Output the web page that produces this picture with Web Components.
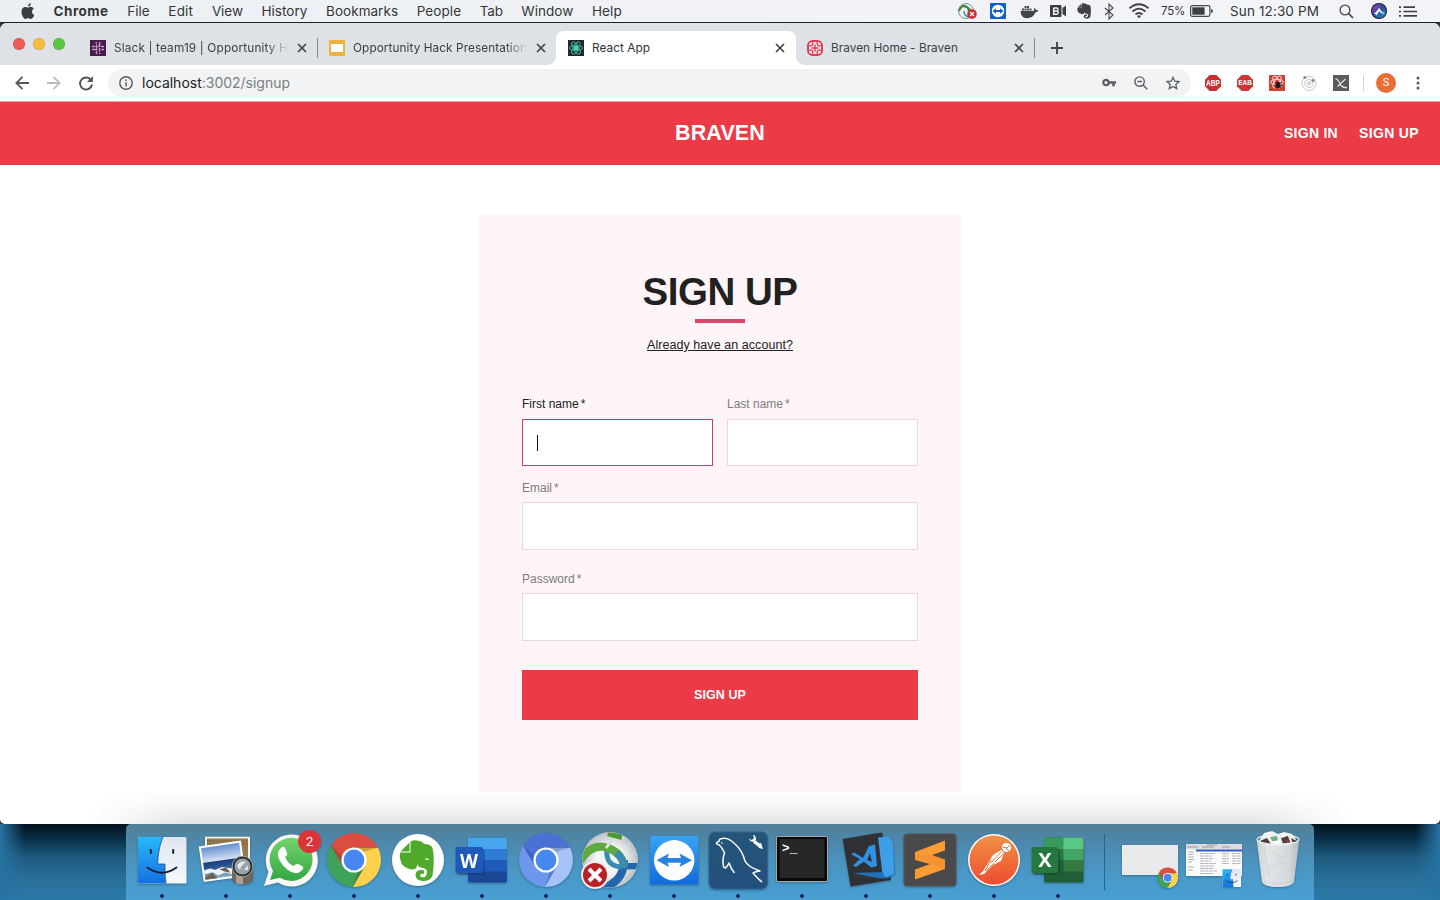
<!DOCTYPE html>
<html lang="en">
<head>
<meta charset="utf-8">
<title>React App</title>
<style>
  html, body { margin: 0; height: 100%; overflow: hidden; }
  body { font-family: Inter, Roboto, sans-serif; color: #333639; }
</style>
</head>
<body>
<desktop-screen>
  <menu-bar slot="menu"></menu-bar>
  <browser-window>
    <browser-tab slot="tabs" data-icon="slack" data-width="174" data-fade>Slack | team19 | Opportunity H</browser-tab>
    <browser-tab slot="tabs" data-icon="slides" data-width="174" data-fade data-plain>Opportunity Hack Presentation</browser-tab>
    <browser-tab slot="tabs" data-icon="react" data-width="58" data-active>React App</browser-tab>
    <browser-tab slot="tabs" data-icon="braven" data-width="127">Braven Home - Braven</browser-tab>
    <site-header></site-header>
    <sign-up-card></sign-up-card>
  </browser-window>
  <mac-dock slot="dock"></mac-dock>
</desktop-screen>

<script>
const define = (name, html, setup) => {
  const template = document.createElement("template");
  template.innerHTML = html;
  customElements.define(name, class extends HTMLElement {
    constructor() {
      super();
      this.attachShadow({ mode: "open" });
      this.shadowRoot.appendChild(template.content.cloneNode(true));
    }
    connectedCallback() {
      if (setup) setup(this, this.shadowRoot);
    }
  });
};

// three sectors of the Chrome wheel, shared by Chrome, Chromium and the small badge
const wheel = (top, right, left, hub, shade) => `
  <path fill="${left}" d="M30.9 62.95A27 27 0 0 1 9.2 21.55L21.2 42.25L42.8 42.25Z"/>
  <path fill="${right}" d="M55.9 23.5A27 27 0 0 1 30.9 62.95L42.8 42.25L32 23.5Z"/>
  <path fill="${top}" d="M9.2 21.55A27 27 0 0 1 55.9 23.5L32 23.5L21.2 42.25Z"/>
  <path fill="${shade}" opacity=".25" d="M32 23.5H55.9L42 28ZM21.2 42.25L9.2 21.55L20 32ZM42.8 42.25L30.9 62.95L36 47Z"/>
  <circle cx="32" cy="36" r="12.6" fill="#fff"/><circle cx="32" cy="36" r="10.4" fill="${hub}"/>`;

const face = `
  <defs><linearGradient id="fb" x2="0" y2="1"><stop stop-color="#27b9fb"/><stop offset="1" stop-color="#1670e0"/></linearGradient>
  <linearGradient id="fw" x2="0" y2="1"><stop stop-color="#dfe5f0"/><stop offset="1" stop-color="#f6f7fb"/></linearGradient></defs>
  <rect x="8" y="13" width="48.500" height="46.500" rx="1.500" fill="url(#fw)"/>
  <path fill="url(#fb)" d="M9.500 13H33C30 20 28 29 27.700 40H35C35 47 35 53 36 59.500H9.500Q8 59.500 8 58V14.500Q8 13 9.500 13Z"/>
  <path fill="none" stroke="#1b4d8c" stroke-width=".8" d="M33 13C30 20 28 29 27.700 40H35C35 47 35 53 36 59.500"/>
  <path fill="none" stroke="#10202f" stroke-width="2" stroke-linecap="round" d="M20.800 26V29M43.200 26V29"/>
  <path fill="none" stroke="#10202f" stroke-width="1.800" stroke-linecap="round" d="M17.500 43.500Q32 54 46.500 43.500"/>`;

const close = `<path d="M1 1L9 9M9 1L1 9" stroke="#3f4246" stroke-width="1.7"/>`;
const elephant = `
  <path fill="currentColor" d="M14 28.500H24.500V17.500Q28 15.500 33 17Q37 17.500 38 20Q45 20 46.500 24Q49 34 46.500 52Q44 57.500 36 57Q29.500 56 29.500 51Q30 45.500 36 46L38 46.500V50Q34 49 34 52Q35.500 54 39 53Q41 51 41 47Q40 44 35 43.500Q32 43 31.500 40Q31 45.500 26 45.500Q17 44 15 38Q13 33 14 28.500ZM14.500 27.500L23.500 18.500V27.500Z"/>`;

// name: [width, height, drawing]
const icons = {
  apple: [14, 17, `<path fill="#3b3d40" d="M9.300 3.800C8.500 4 7.400 4.700 7 4.700C6.300 4.700 5.400 4 4.300 4C2.200 4 .5 5.800.5 8.800C.5 12.400 2.700 16 4.500 16C5.500 16 6 15.300 7.200 15.300C8.400 15.300 8.800 16 9.800 16C11.400 16 12.800 13.600 13.300 12.100C10.400 10.900 10.400 7 12.800 5.700C12 4.600 10.700 3.700 9.300 3.800ZM6.900 3.500C6.900 1.800 8.200.5 9.900.3C10 2 8.600 3.500 6.900 3.500Z"/>`],
  vpn: [21, 16, `<circle cx="9" cy="8" r="7.500" fill="#edf2ef" stroke="#687478" stroke-width=".8"/><path d="M2 8C5 1 11 1 12 9M5 3Q12 3 15 10" fill="none" stroke="#3b8a4c" stroke-width="2"/><path d="M7 8Q7 13 12 14" fill="none" stroke="#4d8ca5" stroke-width="1.500"/><circle cx="15" cy="11" r="4.800" fill="#c63136"/><path d="M13 9L17 13M17 9L13 13" stroke="#fff" stroke-width="1.300"/>`],
  viewer: [16, 16, `<rect width="16" height="16" rx="1" fill="#0e5fc9"/><circle cx="8" cy="8" r="6.200" fill="#fff"/><path fill="#0e5fc9" d="M2.500 8L6 5.300V7H10V5.300L13.500 8L10 10.700V9H6V10.700Z"/>`],
  docker: [19, 15, `<path fill="#404347" d="M.5 7H13.500Q14.500 6.500 14 4Q15.700 4.500 16 6.200Q17.500 5.800 18.500 6.500Q17.800 8.300 15.500 8.300Q13 14.500 6.500 14.200Q.8 14 .5 7ZM2 4.500H4V6.500H2ZM4.500 4.500H6.500V6.500H4.500ZM7 4.500H9V6.500H7ZM9.500 4.500H11.500V6.500H9.500ZM7 2H9V4H7ZM4.500 2H6.500V4H4.500Z"/>`],
  bcam: [17, 14, `<rect y="1" width="11.500" height="12" rx="1" fill="#3c3f42"/><path fill="#3c3f42" d="M12.500 4L16 1.500V12.500L12.500 10Z"/><path fill="none" stroke="#f2f4f6" stroke-width="1.400" d="M3.500 4H6.500Q8.200 4 8 5.500Q7.800 7 6 7H3.800H6.500Q8.500 7 8.300 8.700Q8 10.200 6.500 10.200H3.700V4"/>`],
  note: [14, 16, `<svg width="14" height="16" viewBox="13 16 35 42" preserveAspectRatio="none" color="#404246">${elephant}</svg>`],
  bluetooth: [10, 17, `<path fill="none" stroke="#45484b" stroke-width="1.100" d="M1 5L9 12L5 16V1L9 5L1 12"/>`],
  wifi: [22, 16, `<g fill="none" stroke="#3e4144" stroke-width="1.800"><path d="M1.500 5.200Q11-2.800 20.500 5.200M4.500 8.500Q11 2.800 17.500 8.500M7.500 11.500Q11 8.500 14.500 11.500"/></g><path fill="#3e4144" d="M9 13Q11 11.600 13 13L11 15.200Z"/>`],
  battery: [24, 12, `<rect x=".6" y=".6" width="19.300" height="10.800" rx="1.800" fill="none" stroke="#45484b" stroke-width="1.200"/><rect x="2.300" y="2.300" width="12.300" height="7.400" fill="#3c3f42"/><path fill="#45484b" d="M21 4Q23 4.500 23 6Q23 7.500 21 8Z"/>`],
  search: [15, 15, `<circle cx="6" cy="6" r="4.900" fill="none" stroke="#44474a" stroke-width="1.300"/><path d="M9.700 9.700L14 14" stroke="#44474a" stroke-width="1.700"/>`],
  siri: [16, 16, `<defs><linearGradient id="s" x2="1" y2="1"><stop stop-color="#b03fb2"/><stop offset=".5" stop-color="#2c4c99"/><stop offset="1" stop-color="#18a9d0"/></linearGradient></defs><circle cx="8" cy="8" r="8" fill="#15182f"/><circle cx="8" cy="8" r="6.900" fill="url(#s)"/><path fill="#e6f2ff" d="M2.500 10.500Q6 9 8 4.500Q10 9 14 11Q11 11 8 8.500Q6 12.500 4.500 13Q6 10.500 2.500 10.500Z"/>`],
  list: [18, 11, `<path d="M4.500 1.200H16M4.500 5.500H18M4.500 9.800H18" stroke="#3e4144" stroke-width="1.700"/><path d="M0 1.200H2M0 5.500H2M0 9.800H2" stroke="#3e4144" stroke-width="1.700"/>`],
  close: [10, 10, close],
  plus: [12, 12, `<path d="M6 0V12M0 6H12" stroke="#3f4246" stroke-width="1.800"/>`],
  slack: [16, 16, `<rect width="16" height="16" fill="#481b4b"/><g stroke="#c49bc4" stroke-width="1.500" stroke-linecap="round"><path d="M6.300 2.500V3M6.500 5V8M2.500 6.600H4.500M9.600 2.500V6M11.500 6.500H13.500M8.500 6.500H9M2.500 9.600H7M6.500 11.500V13.500M9.600 8.500V11M9.600 13.300V13.500M12 9.600H13.500"/></g>`],
  slides: [16, 16, `<rect width="16" height="16" rx="1.500" fill="#f2b03f"/><rect x="2" y="4" width="12" height="8" fill="#fff"/>`],
  react: [16, 16, `<rect width="16" height="16" fill="#222a31"/><g fill="none" stroke="#3fb795" stroke-width=".9"><ellipse cx="8" cy="8" rx="6.700" ry="2.800"/><ellipse cx="8" cy="8" rx="6.700" ry="2.800" transform="rotate(60 8 8)"/><ellipse cx="8" cy="8" rx="6.700" ry="2.800" transform="rotate(120 8 8)"/></g><rect x="6" y="6" width="4" height="4" fill="#52d3ac"/>`],
  braven: [16, 16, `<rect x="1" y="1" width="14" height="14" rx="4.500" fill="#fbe3e6" stroke="#dc3f53" stroke-width="1.900"/><path fill="none" stroke="#dc3f53" stroke-width="1.300" d="M5.800 1V4Q5.800 5.800 4 5.800H1M10.200 1V4Q10.200 5.800 12 5.800H15M5.800 15V12Q5.800 10.200 4 10.200H1M10.200 15V12Q10.200 10.200 12 10.200H15"/><path stroke="#dc3f53" stroke-width="1.500" d="M8 4.500V11.500M4.500 8H11.500"/>`],
  back: [14, 14, `<path d="M14 7H1.500M7.500.8L1.300 7L7.500 13.200" fill="none" stroke="#55585c" stroke-width="1.800"/>`],
  forward: [14, 14, `<path d="M0 7H12.500M6.500.8L12.700 7L6.500 13.200" fill="none" stroke="#bbbdc0" stroke-width="1.800"/>`],
  reload: [14, 14, `<path d="M12.200 4.300A6 6 0 1 0 13 8.500" fill="none" stroke="#505357" stroke-width="1.900"/><path fill="#505357" d="M13.900 0V6H8Z"/>`],
  info: [14, 14, `<circle cx="7" cy="7" r="6.200" fill="none" stroke="#57595d" stroke-width="1.400"/><path d="M7 6.200V10.500M7 3.500V5" stroke="#57595d" stroke-width="1.500"/>`],
  key: [14, 9, `<circle cx="4" cy="4.500" r="2.700" fill="none" stroke="#5b5e62" stroke-width="2.200"/><path d="M7 4.500H14M11.500 4.500V8.300" stroke="#5b5e62" stroke-width="2.600"/>`],
  zoomout: [14, 14, `<circle cx="5.600" cy="5.600" r="4.700" fill="none" stroke="#5b5e62" stroke-width="1.400"/><path d="M9 9L13.300 13.300M3.300 5.600H7.900" stroke="#5b5e62" stroke-width="1.500"/>`],
  star: [14, 14, `<path fill="none" stroke="#5b5e62" stroke-width="1.300" d="M7 1.300L8.700 5.200L13 5.600L9.800 8.400L10.700 12.600L7 10.400L3.300 12.600L4.200 8.400L1 5.600L5.300 5.200Z"/>`],
  abp: [16, 16, `<path fill="#c92d2d" d="M4.700 0H11.300L16 4.700V11.300L11.300 16H4.700L0 11.300V4.700Z"/><text x="1" y="11" font-size="8.500" font-weight="700" fill="#fff" textLength="14" lengthAdjust="spacingAndGlyphs" font-family="Liberation Sans">ABP</text>`],
  eab: [16, 16, `<path fill="#cf3434" d="M4.700 0H11.300L16 4.700V11.300L11.300 16H4.700L0 11.300V4.700Z"/><text x="8" y="10.300" font-size="6.500" font-weight="700" fill="#fff" text-anchor="middle" font-family="Liberation Sans">EAB</text>`],
  reactbug: [16, 16, `<rect width="16" height="16" fill="#cf4038"/><g fill="none" stroke="#f4d4d1" stroke-width="1"><ellipse cx="8" cy="7" rx="6.500" ry="2.700"/><ellipse cx="8" cy="7" rx="6.500" ry="2.700" transform="rotate(60 8 7)"/><ellipse cx="8" cy="7" rx="6.500" ry="2.700" transform="rotate(120 8 7)"/></g><ellipse cx="9" cy="10" rx="2.400" ry="3.300" fill="#221918"/><path d="M5.500 8L12.500 13M12.500 7.500L6 13M5.500 10.500H13" stroke="#221918" stroke-width=".9"/>`],
  orbit: [16, 16, `<g fill="none" stroke="#c7c9cb"><circle cx="8" cy="8.500" r="7"/><circle cx="8" cy="8.500" r="4.200"/></g><circle cx="8" cy="8.500" r="2.200" fill="#d4d6d8"/><circle cx="3.800" cy="2.500" r="1.500" fill="#85898c"/><circle cx="12" cy="5.500" r="1.600" fill="#85898c"/>`],
  angle: [16, 16, `<rect width="16" height="16" fill="#595c5f"/><path d="M2.500 3.500Q6 5 7.500 10Q10 13 14 12.500M12.500 4L4.500 11.500" fill="none" stroke="#e2e2e2" stroke-width="1.300"/>`],
  dots: [4, 14, `<g fill="#55585c"><circle cx="2" cy="2" r="1.500"/><circle cx="2" cy="7" r="1.500"/><circle cx="2" cy="12" r="1.500"/></g>`],

  // dock drawings share a 64x76 cell
  finder: [64, 76, face],
  preview: [64, 76, `<defs><linearGradient id="sky" x2="0" y2="1"><stop stop-color="#668fd3"/><stop offset=".45" stop-color="#d3e0f2"/><stop offset=".48" stop-color="#1d3d80"/><stop offset=".64" stop-color="#2a5590"/><stop offset="1" stop-color="#8db2c5"/></linearGradient></defs>
    <rect x="11" y="12.700" width="45" height="36" fill="#f5f1e7"/><rect x="13" y="14.500" width="41" height="32" fill="#94794e"/><path d="M13 17H54M13 20H54" stroke="#5f4c30" stroke-dasharray="1 2"/>
    <g transform="rotate(-8 27 37)"><rect x="7" y="19.500" width="42.500" height="36" fill="#fff"/><rect x="9" y="21.500" width="38.500" height="32" fill="url(#sky)"/><path fill="#eef3f3" d="M9 44L15 43L20 45L27 43L37 46L47 44V46L38 48L46 51L37 52L30 49L22 51L17 47L9 48Z"/><path fill="#72604e" d="M24 45L31 44L35 50L29 48ZM9 51L17 48L21 53.500H9Z"/></g>
    <path fill="#6d675e" d="M38 43V57Q48 64 59 57V43Z"/><path fill="#a9a198" d="M42 49V59Q46 61 49 60V51Z"/><circle cx="48.500" cy="42.500" r="9.300" fill="#99a3aa" stroke="#292928" stroke-width="2.400"/><circle cx="48.500" cy="42.500" r="10.300" fill="none" stroke="#b4b4ae" stroke-width=".9"/><path d="M43 42Q46 36 52 38Q47 41 46 46ZM50 46L54 41V46Z" fill="#e5e9e8"/>`],
  whatsapp: [64, 76, `<defs><linearGradient id="wa" x2="0" y2="1"><stop stop-color="#73d46b"/><stop offset="1" stop-color="#35a744"/></linearGradient></defs><path fill="#f7f8f7" d="M6 62L10.500 48A26 26 0 1 1 20 58.500Z"/><path fill="url(#wa)" d="M12 56L15 47A21.500 21.500 0 1 1 22 53.800Z"/><path fill="#fff" d="M22 25Q25 21 27 24L29 29Q30 31 27 33Q30 40 36 42Q38 39 40 40L44 42Q47 44 43 47Q38 52 30 46Q19 37 20 29Q20 27 22 25Z"/><circle cx="51.500" cy="17.500" r="11.500" fill="#dd3439"/><text x="51.500" y="22.200" text-anchor="middle" fill="#fff" font-size="13.500" font-family="Roboto">2</text>`],
  chrome: [64, 76, wheel("#db4d40", "#fdd14c", "#3fa25a", "#4687f1", "#421")],
  evernote: [64, 76, `<circle cx="32" cy="36" r="26" fill="#fff"/><g color="#4faa2b">${elephant}</g><path d="M38.500 35Q42 33 43 36Q40.500 36 38.500 35Z" fill="#fff"/>`],
  word: [64, 76, `<rect x="18" y="13.500" width="39" height="45" rx="1.500" fill="#1b4797"/><rect x="18" y="13.500" width="39" height="11.500" fill="#45a5ee"/><rect x="18" y="25" width="39" height="11.200" fill="#2e7cd4"/><rect x="18" y="36.200" width="39" height="11.200" fill="#205abc"/><rect x="7" y="25" width="28" height="26" rx="2" fill="#113061" opacity=".35"/><rect x="5.700" y="23" width="27.300" height="26" rx="1.500" fill="#1f59b9"/><text x="10" y="43.500" fill="#fff" font-size="20" font-weight="700" font-family="Open Sans" textLength="18" lengthAdjust="spacingAndGlyphs">W</text>`],
  chromium: [64, 76, wheel("#4a72d6", "#a7c2f9", "#6d97ee", "#4688ef", "#136")],
  connect: [64, 76, `<defs><radialGradient id="ball"><stop offset=".5" stop-color="#f3f4f4"/><stop offset="1" stop-color="#bac1c4"/></radialGradient><clipPath id="bc"><circle cx="32" cy="36" r="27.500"/></clipPath></defs><circle cx="32" cy="36" r="28" fill="url(#ball)"/><g clip-path="url(#bc)" fill="none"><path d="M24 64Q46 58 46 36" stroke="#2365ab" stroke-width="8"/><path d="M29 26Q27 43 46 43H62" stroke="#3a8bb4" stroke-width="5"/><path d="M44 42H62" stroke="#2365ab" stroke-width="6"/><path d="M2 37Q14 18 30 24Q44 29 46 42" stroke="#5dab3f" stroke-width="8"/><path d="M38 29Q46 34 46 44" stroke="#3a8bb4" stroke-width="7"/><path d="M28 24Q34 14 46 13" stroke="#d9dede" stroke-width="3"/><path d="M30 9L44 13" stroke="#4c9a34" stroke-width="6"/></g><circle cx="17" cy="51" r="14" fill="#eee"/><circle cx="17" cy="51" r="12" fill="#b82126"/><path d="M11 45L23 57M23 45L11 57" stroke="#fff" stroke-width="4"/>`],
  teamviewer: [64, 76, `<defs><linearGradient id="tv" x2="0" y2="1"><stop stop-color="#39a3f2"/><stop offset="1" stop-color="#126bdc"/></linearGradient></defs><rect x="8" y="12" width="48.500" height="48.500" rx="1.500" fill="url(#tv)"/><circle cx="32.200" cy="36.300" r="20.200" fill="#fff"/><path fill="#2782df" d="M14.500 36.300L27 29.500L25.500 34H39L37.500 29.500L50 36.300L37.500 43L39 38.700H25.500L27 43Z"/>`],
  mysql: [64, 76, `<defs><linearGradient id="my" x2="0" y2="1"><stop stop-color="#245579"/><stop offset="1" stop-color="#234f7d"/></linearGradient></defs><rect x="3" y="8" width="58.500" height="57" rx="6" fill="url(#my)" stroke="#2f668e"/><path fill="none" stroke="#f2f7fa" stroke-width="1.600" stroke-linejoin="round" d="M28.500 49Q25 45 23 39Q19 47 17.500 42Q16 36 18.500 29Q15 21 11 20Q9.500 18 13 17.500Q13 14.500 16.500 14.500Q22 13 29 20Q36 26 39 37Q42 43 54 47Q48 48 47 49Q52 55 56 58"/><circle cx="16" cy="19" r=".8" fill="#fff"/><path d="M49 18L54 22" stroke="#fff" stroke-width="3.500" stroke-linecap="round"/><path d="M43 15Q45 20 50 16Q50 11 47 11L48 14L46 16ZM51 20L55 19L57 25L53 24Z" fill="#fff"/>`],
  terminal: [64, 76, `<rect x="6" y="12" width="52" height="46" rx="2" fill="#a7a9aa"/><rect x="7" y="13" width="50" height="44" rx="1" fill="#090909"/><rect x="9.500" y="15" width="45" height="39" fill="#262727"/><text x="12" y="28" fill="#fff" font-size="13" font-weight="700" font-family="Liberation Mono">&gt;_</text>`],
  vscode: [64, 76, `<path fill="#303135" d="M8.700 15L48 8.500L57 56L16.500 62.500Z"/><path fill="#1978c7" d="M54 13L59 18.500L61 50L52 55Z"/><path fill="#3d9fe8" d="M44 13.500L54 12.500L59 18.500L60 50L49 54Z"/><path fill="#1f72b8" d="M18.500 49L49 48L51 54.500L43 54Z"/><path fill="#2d92e4" fill-rule="evenodd" d="M17 30L20 28.500L29 34L35 22L41 20.500L43 42L37 43.500L30 37.500L22 43L19 41.500L26 35ZM36 29L33 36L38 38Z"/>`],
  sublime: [64, 76, `<rect x="6" y="10" width="52" height="52" rx="3" fill="#4a4949" stroke="#575654"/><path fill="#fb9b34" d="M17 28L47 16.500V26.500L34 31L47 35.500V45L17 55.500V45.500L32 40L17 36Z"/><path fill="#df7b20" d="M34 31L47 35.500V45L40 42L17 36V31Z" opacity=".25"/>`],
  postman: [64, 76, `<defs><linearGradient id="po" x2="0" y2="1"><stop stop-color="#f09144"/><stop offset="1" stop-color="#ed4d31"/></linearGradient></defs><circle cx="32" cy="36" r="26" fill="#fff"/><circle cx="32" cy="36" r="24.500" fill="url(#po)"/><circle cx="44.500" cy="23.500" r="4.600" fill="#fff"/><path d="M41 23L45 24L48 21M44 24L47 27" stroke="#df6f43" fill="none"/><path fill="#fff" d="M39 26L42 29L39 37L31 41L22 50L17 51L21 47L28 36L31 31Z"/><path d="M39 28L29 39M41 30L33 38M29 36L23 47M32 39L24 47" stroke="#ec7044" fill="none"/>`],
  excel: [64, 76, `<rect x="18" y="13.500" width="39.500" height="45" rx="1.500" fill="#205e38"/><rect x="18" y="13.500" width="20" height="11.500" fill="#389b5a"/><rect x="37.500" y="13.500" width="20" height="11.500" fill="#58c888"/><rect x="18" y="25" width="20" height="11.200" fill="#267943"/><rect x="37.500" y="25" width="20" height="11.200" fill="#43a466"/><rect x="37.500" y="36.200" width="20" height="11.200" fill="#347a42"/><rect x="7" y="25" width="27" height="26" rx="2" fill="#123c23" opacity=".4"/><rect x="5.700" y="23" width="26.300" height="26" rx="1.500" fill="#25793f"/><text x="19" y="43.200" text-anchor="middle" fill="#fff" font-size="20" font-weight="700" font-family="Open Sans">X</text>`],
  minichrome: [64, 76, `<rect x="4" y="21" width="56" height="30" fill="#e9eaeb"/><g transform="translate(37.500 40) scale(.382)">${wheel("#db4d40", "#fdd14c", "#3fa25a", "#4687f1", "#421")}</g>`],
  minifinder: [64, 76, `<rect x="4" y="20" width="56" height="32" fill="#fafafa"/><rect x="4" y="20" width="56" height="5.500" fill="#dcdde0"/><path d="M5 23H16M25 21H35M20 23H32M40 23H48" stroke="#777b82" stroke-width=".7"/><path d="M14 26.500H60" stroke="#2d59c7" stroke-width="1.800"/><path d="M6 28H12M6 30.500H11M6 33H12M6 35.500H12M6 38H10M6 43H12M6 46H11" stroke="#9b9da1" stroke-width=".8"/><path d="M18 29.500H33M18 32H30M18 34.500H32M18 37H29M18 39.500H34M18 42H32M18 44.500H31M18 47H35M18 49.500H31M40 29.500H47M40 32H46M40 34.500H47M40 37H46M40 39.500H47M50 29.500H59M50 32H59M50 34.500H59M50 37H59M50 39.500H59" stroke="#9ea5b1" stroke-width=".8" stroke-dasharray="4 .6"/><g transform="translate(37.500 40.200) scale(.382)">${face}</g>`],
  trash: [64, 76, `<defs><linearGradient id="tr"><stop stop-color="#d2d4d5"/><stop offset=".25" stop-color="#ececec"/><stop offset=".75" stop-color="#dcdddd"/><stop offset="1" stop-color="#b9c0c4"/></linearGradient></defs><path fill="#f0f0ed" d="M12 18L18 9L26 7L32 10L38 8L46 10L51 17L46 22H18Z"/><path fill="#4a4038" d="M14 17L21 14L25 20L17 20ZM35 14L42 12L44 18L37 20ZM45 14L51 17L47 20Z"/><path fill="#67b48d" d="M24 13L31 12L32 17L26 17Z"/><path fill="#8b3c44" d="M38 17L43 15L45 20Z"/><path fill="#fff" d="M18 10L26 8L23 13ZM34 10L40 9L37 14ZM28 17L35 16L34 21H27Z"/><path fill="url(#tr)" opacity=".95" d="M10.700 16Q15 21 32 21Q49 21 53.300 16L48 58Q46 63 32 63Q18 63 16 58Z"/><ellipse cx="32" cy="15.500" rx="21" ry="4.800" fill="none" stroke="#eef0f0" stroke-width="1.200"/><path fill="none" stroke="#c6c9ca" stroke-width=".6" d="M18 24L23 53M43 24L38 34L27 29M22 44L35 38L43 46M18 57Q31 62 46 57"/>`]
};

define("ui-icon", `
  <style>
    :host { display: block; flex: none; }
    svg { display: block; overflow: visible; }
  </style>`, (host, root) => {
  const [w, h, art] = icons[host.dataset.name];
  const holder = document.createElement("div");
  holder.innerHTML = `<svg width="${w}" height="${h}" viewBox="0 0 ${w} ${h}">${art}</svg>`;
  root.appendChild(holder.firstChild);
});

// spreads its text over data-width pixels
define("fit-text", `
  <style>
    :host { display: block; flex: none; white-space: nowrap; }
    span { display: inline-block; text-decoration: inherit; }
  </style>
  <span><slot></slot></span>`, (host, root) => {
  const span = root.querySelector("span");
  const width = Number(host.dataset.width);
  const spacing = (width - span.getBoundingClientRect().width) / host.textContent.length;
  span.style.letterSpacing = `${spacing}px`;
  host.style.width = `${width}px`;
});

define("menu-bar", `
  <style>
    :host {
      display: flex;
      align-items: center;
      justify-content: space-between;
      box-sizing: border-box;
      height: 23px;
      padding: 0 22px 0 21px;
      border-bottom: 1px solid #1d2330;
      background: linear-gradient(90deg, #edf0f3, #f3f4f7);
      font: 13.500px/22px Inter, Roboto, sans-serif;
      color: #333639;
    }
    div { display: flex; align-items: center; height: 22px; }
    .left { gap: 18.600px; }
    .left b { font-weight: 700; }
  </style>
  <div class="left">
    <ui-icon data-name="apple"></ui-icon>
    <b><fit-text data-width="55">Chrome</fit-text></b>
    <fit-text data-width="22.500">File</fit-text>
    <fit-text data-width="25">Edit</fit-text>
    <fit-text data-width="31">View</fit-text>
    <fit-text data-width="46">History</fit-text>
    <fit-text data-width="72">Bookmarks</fit-text>
    <fit-text data-width="44.500">People</fit-text>
    <fit-text data-width="23">Tab</fit-text>
    <fit-text data-width="52">Window</fit-text>
    <fit-text data-width="30">Help</fit-text>
  </div>
  <div class="right">
    <ui-icon data-name="vpn"></ui-icon>
    <ui-icon data-name="viewer" style="margin-left:12px"></ui-icon>
    <ui-icon data-name="docker" style="margin-left:14px"></ui-icon>
    <ui-icon data-name="bcam" style="margin-left:11px"></ui-icon>
    <ui-icon data-name="note" style="margin-left:10px"></ui-icon>
    <ui-icon data-name="bluetooth" style="margin-left:13px"></ui-icon>
    <ui-icon data-name="wifi" style="margin-left:14px"></ui-icon>
    <fit-text data-width="24" style="margin-left:11px;font-size:11.500px">75%</fit-text>
    <ui-icon data-name="battery" style="margin-left:5px"></ui-icon>
    <fit-text data-width="89" style="margin-left:16px">Sun 12:30 PM</fit-text>
    <ui-icon data-name="search" style="margin-left:20px"></ui-icon>
    <ui-icon data-name="siri" style="margin-left:17px"></ui-icon>
    <ui-icon data-name="list" style="margin-left:12px;margin-right:1px"></ui-icon>
  </div>`);

define("browser-tab", `
  <style>
    :host {
      display: flex;
      align-items: center;
      position: relative;
      box-sizing: border-box;
      width: 239px;
      height: 34px;
      padding: 0 9px 0 12px;
      font: 11.800px/18px Inter, Roboto, sans-serif;
      color: #3c4043;
    }
    .label { flex: 1; min-width: 0; margin: 0 9px 0 8px; }
    :host([data-fade]) .label { -webkit-mask: linear-gradient(90deg, #000 88%, transparent); }
    :host([data-active]) { width: 240px; margin-right: -1px; padding-right: 10px; background: #fff; border-radius: 8px 8px 0 0; color: #303235; }
    :host([data-active])::before, :host([data-active])::after {
      content: "";
      position: absolute;
      bottom: 0;
      width: 8px;
      height: 8px;
    }
    :host([data-active])::before { left: -8px; background: radial-gradient(circle at 0 0, transparent 7.500px, #fff 8px); }
    :host([data-active])::after { right: -8px; background: radial-gradient(circle at 100% 0, transparent 7.500px, #fff 8px); }
    i { width: 1px; height: 20px; margin-left: 10px; margin-right: -10px; background: #85898e; }
    :host([data-active]) i, :host([data-plain]) i { visibility: hidden; }
  </style>
  <div class="icon"></div>
  <div class="label"></div>
  <ui-icon data-name="close"></ui-icon>
  <i></i>`, (host, root) => {
  const icon = document.createElement("ui-icon");
  icon.dataset.name = host.dataset.icon;
  root.querySelector(".icon").appendChild(icon);
  const label = document.createElement("fit-text");
  label.dataset.width = host.dataset.width;
  label.textContent = host.textContent;
  root.querySelector(".label").appendChild(label);
});

define("tool-bar", `
  <style>
    :host { display: flex; align-items: center; box-sizing: border-box; height: 37px; padding: 0 20px 1px 15px; background: #fff; border-bottom: 1px solid #bdb7ba; }
    .url {
      display: flex;
      align-items: center;
      box-sizing: border-box;
      width: 1083px;
      height: 28px;
      margin-left: 15px;
      padding: 0 11px;
      border-radius: 14px;
      background: #f1f3f4;
      font: 14px/28px Inter, Roboto, sans-serif;
      color: #7b7e82;
    }
    .url b { font-weight: 400; color: #202124; }
    .url fit-text { margin-left: 9px; }
    .rule { width: 1px; height: 16px; margin: 0 12px 0 14px; background: #cfd1d4; }
    .avatar { width: 20px; height: 20px; border-radius: 50%; background: #e86e34; color: #fff; font: 11px/20px Roboto, sans-serif; text-align: center; }
  </style>
  <ui-icon data-name="back"></ui-icon>
  <ui-icon data-name="forward" style="margin-left:18px"></ui-icon>
  <ui-icon data-name="reload" style="margin-left:18px"></ui-icon>
  <div class="url">
    <ui-icon data-name="info"></ui-icon>
    <fit-text data-width="148"><b>localhost</b>:3002/signup</fit-text>
    <ui-icon data-name="key" style="margin-left:auto"></ui-icon>
    <ui-icon data-name="zoomout" style="margin-left:18px"></ui-icon>
    <ui-icon data-name="star" style="margin-left:18px"></ui-icon>
  </div>
  <ui-icon data-name="abp" style="margin-left:14px"></ui-icon>
  <ui-icon data-name="eab" style="margin-left:16px"></ui-icon>
  <ui-icon data-name="reactbug" style="margin-left:16px"></ui-icon>
  <ui-icon data-name="orbit" style="margin-left:16px"></ui-icon>
  <ui-icon data-name="angle" style="margin-left:16px"></ui-icon>
  <div class="rule"></div>
  <div class="avatar">S</div>
  <ui-icon data-name="dots" style="margin-left:auto"></ui-icon>`);

define("browser-window", `
  <style>
    :host {
      display: flex;
      flex-direction: column;
      position: relative;
      height: 801px;
      overflow: hidden;
      border-radius: 7px 7px 5px 5px;
      background: #fff;
    }
    .strip { display: flex; align-items: center; box-sizing: border-box; height: 42px; padding: 8px 0 0 19px; background: #dee1e6; }
    .lights { display: flex; gap: 8px; width: 59px; margin-top: -9px; }
    .lights span { width: 12px; height: 12px; border-radius: 50%; background: #ee5b54; box-shadow: inset 0 0 0 .5px #0003; margin-left: -6px; }
    .lights span + span { margin-left: 0; background: #f6bd3e; }
    .lights span:last-child { background: #5bc63f; }
    .shade {
      position: absolute;
      left: 90px;
      right: 90px;
      bottom: 0;
      height: 34px;
      background: linear-gradient(transparent, #00000007 35%, #0000001a);
      -webkit-mask: linear-gradient(90deg, transparent, #000 90px, #000 calc(100% - 90px), transparent);
    }
  </style>
  <div class="strip">
    <div class="lights"><span></span><span></span><span></span></div>
    <slot name="tabs"></slot>
    <ui-icon data-name="plus" style="margin-left:17px"></ui-icon>
  </div>
  <tool-bar></tool-bar>
  <slot></slot>
  <div class="shade"></div>`);

define("site-header", `
  <style>
    :host {
      display: grid;
      grid-template-columns: 1fr auto 1fr;
      align-items: center;
      box-sizing: border-box;
      height: 63px;
      padding: 0 21px 2px;
      background: #eb3b47;
      color: #fff;
      font: bold 14px/20px "Liberation Sans", Arial, sans-serif;
    }
    .brand { grid-column: 2; font-size: 21.500px; }
    nav { display: flex; justify-content: flex-end; gap: 21px; }
  </style>
  <fit-text class="brand" data-width="90">BRAVEN</fit-text>
  <nav>
    <fit-text data-width="54">SIGN IN</fit-text>
    <fit-text data-width="60">SIGN UP</fit-text>
  </nav>`);

define("text-field", `
  <style>
    :host { display: block; color: #817a7d; font: 12px/16px "Liberation Sans", Arial, sans-serif; }
    :host([data-focused]) { color: #202020; }
    label { display: flex; gap: 2px; }
    .box { display: flex; align-items: center; box-sizing: border-box; height: var(--box-height, 48px); margin-top: var(--label-gap, 6px); padding-left: 14px; border: 1px solid #ead9d3; background: #fff; }
    :host([data-focused]) .box { border-color: #c93c66; }
    :host([data-focused]) .box::before { content: ""; width: 1px; height: 16px; background: #111; }
  </style>
  <label><slot></slot><span>*</span></label>
  <div class="box"></div>`);

define("sign-up-card", `
  <style>
    :host {
      display: block;
      box-sizing: border-box;
      width: 482px;
      height: 577px;
      margin: 50px auto 0;
      padding: 54px 43px 0;
      background: #fff5f8;
      font-family: "Liberation Sans", Arial, sans-serif;
      color: #212121;
    }
    header { display: flex; flex-direction: column; align-items: center; }
    h1 { margin: 0; font-size: 38.500px; line-height: 46px; font-weight: 700; }
    hr { width: 50px; height: 4px; margin: 4px 0 14px; border: 0; background: #da4569; }
    a { font-size: 12.500px; line-height: 16px; }
    a fit-text { text-decoration: underline; }
    .names { display: flex; gap: 14px; margin-top: 43px; --box-height: 47px; --label-gap: 7px; }
    .names text-field { flex: 1; }
    button { display: flex; justify-content: center; align-items: center; width: 100%; height: 50px; margin-top: 29px; border: 0; padding: 0; background: #eb3b47; color: #fff; font: bold 12.500px/16px "Liberation Sans", Arial, sans-serif; }
  </style>
  <header>
    <h1><fit-text data-width="155">SIGN UP</fit-text></h1>
    <hr>
    <a><fit-text data-width="146">Already have an account?</fit-text></a>
  </header>
  <div class="names">
    <text-field data-focused>First name</text-field>
    <text-field>Last name</text-field>
  </div>
  <text-field style="margin-top:14px">Email</text-field>
  <text-field style="margin-top:21px">Password</text-field>
  <button><fit-text data-width="52">SIGN UP</fit-text></button>`);

define("dock-item", `
  <style>
    :host { display: block; position: relative; width: 64px; height: 76px; }
    .icon { filter: drop-shadow(0 1px 1px #0004); }
    :host([data-running])::after { content: ""; position: absolute; left: 30px; top: 70px; width: 4px; height: 4px; border-radius: 50%; background: #0b2b55; }
  </style>
  <div class="icon"></div>`, (host, root) => {
  const icon = document.createElement("ui-icon");
  icon.dataset.name = host.dataset.name;
  root.querySelector(".icon").appendChild(icon);
});

define("mac-dock", `
  <style>
    :host { display: flex; box-sizing: border-box; width: 1188px; height: 76px; margin: 0 auto; padding: 0 4px; border-radius: 5px 5px 0 0; background: linear-gradient(#507f99, #4b93be 50%, #48a0d5); }
    .rule { width: 1px; height: 56px; margin: 10px 13px 0 14px; background: #2d6486; }
  </style>
  <div class="rule"></div>`, (host, root) => {
  const rule = root.querySelector(".rule");
  const item = (name, running) => {
    const el = document.createElement("dock-item");
    el.dataset.name = name;
    el.toggleAttribute("data-running", running);
    return el;
  };
  const apps = ["finder", "preview", "whatsapp", "chrome", "evernote", "word", "chromium", "connect",
    "teamviewer", "mysql", "terminal", "vscode", "sublime", "postman", "excel"];
  rule.before(...apps.map((name) => item(name, true)));
  rule.after(...["minichrome", "minifinder", "trash"].map((name) => item(name, false)));
});

define("desktop-screen", `
  <style>
    :host {
      display: flex;
      flex-direction: column;
      width: 1440px;
      height: 900px;
      overflow: hidden;
      background:
        linear-gradient(90deg, #2672a2 0, transparent 25px, transparent 1415px, #2672a2) 0 824px / 100% 76px no-repeat,
        linear-gradient(#03121c 0, #092f47 20%, #1e587c 42%, #286e99 70%, #2c79a7) 0 824px / 100% 76px no-repeat,
        #30343b;
    }
  </style>
  <slot name="menu"></slot>
  <slot></slot>
  <slot name="dock"></slot>`);
</script>
</body>
</html>
